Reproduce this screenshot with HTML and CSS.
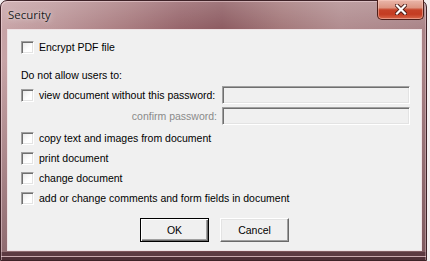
FILE: index.html
```html
<!DOCTYPE html>
<html>
<head>
<meta charset="utf-8">
<link rel="stylesheet" href="styles.css">
</head>
<body>
<div class="window">
  <div class="titlebar">
    <span class="title">Security</span>
    <div class="close">
      <svg width="12" height="11" viewBox="0 0 12 11">
        <path d="M2 1.5 L10 9.5 M10 1.5 L2 9.5" stroke="#4a1a14" stroke-width="4" stroke-linecap="square"/>
        <path d="M2 1.5 L10 9.5 M10 1.5 L2 9.5" stroke="#ffffff" stroke-width="2.2" stroke-linecap="square"/>
      </svg>
    </div>
  </div>
  <div class="client">
    <div class="row first"><span class="cb"></span><span class="lbl">Encrypt PDF file</span></div>
    <div class="heading">Do not allow users to:</div>
    <div class="pw">
      <div class="pwlabel"><span class="cb"></span><span class="lbl">view document without this password:</span></div>
      <div class="field"></div>
      <div class="pwlabel confirm">confirm password:</div>
      <div class="field"></div>
    </div>
    <div class="opts">
      <div class="row"><span class="cb"></span><span class="lbl">copy text and images from document</span></div>
      <div class="row"><span class="cb"></span><span class="lbl">print document</span></div>
      <div class="row"><span class="cb"></span><span class="lbl">change document</span></div>
      <div class="row"><span class="cb"></span><span class="lbl">add or change comments and form fields in document</span></div>
    </div>
    <div class="buttons">
      <div class="btn default">OK</div>
      <div class="btn">Cancel</div>
    </div>
  </div>
</div>
</body>
</html>
```
FILE: styles.css
```css
html, body {
  margin: 0;
  padding: 0;
  background: #f4eff0;
}
.window {
  position: relative;
  width: 427px;
  height: 261px;
  box-sizing: border-box;
  border: 1px solid #3e2227;
  border-radius: 7px 7px 0 0;
  padding: 0 4px 9px 6px;
  display: flex;
  flex-direction: column;
  background:
    linear-gradient(to bottom, rgba(255,255,255,0.18) 0px, rgba(255,255,255,0) 30px, rgba(70,35,42,0) 60px, rgba(70,35,42,0.45) 100%),
    linear-gradient(to right, #c8a4a7 0%, #bd979a 12%, #a87a7e 30%, #96646a 42%, #8c5a60 52%, #a37779 66%, #b08b8e 80%, #a98387 100%);
  box-shadow: inset 1px 1px 0 rgba(255,230,235,0.45), inset -1px 0 0 rgba(255,230,235,0.35), inset 0 -3px 0 #4e2f36, inset 0 -4px 0 #c9a8ad, inset 0 -8px 0 #5c3a41;
}
.titlebar {
  height: 28px;
  flex: none;
  display: flex;
  align-items: center;
  padding-left: 1px;
}
.title {
  font-family: "Open Sans", "Liberation Sans", sans-serif;
  font-size: 11.5px;
  color: #1b1b1b;
  margin-top: -2px;
  text-shadow: 0 0 6px rgba(255,255,255,0.7), 0 0 2px rgba(255,255,255,0.5);
}
.close {
  position: absolute;
  top: -1px;
  right: 2px;
  width: 47px;
  height: 20px;
  box-sizing: border-box;
  border: 1px solid #4d1f1a;
  border-top: none;
  border-radius: 0 0 5px 5px;
  background: linear-gradient(to bottom, #e9b6aa 0%, #dd9582 40%, #c64228 52%, #c43c22 75%, #d8674a 100%);
  box-shadow: inset 0 0 0 1px rgba(255,210,200,0.45);
  display: flex;
  align-items: center;
  justify-content: center;
}
.close svg { display: block; }
.client {
  flex: 1;
  background: #f0f0f0;
  border: 1px solid #efe2e5;
  padding: 7px 0 0 13px;
  font-family: "Liberation Sans", Arial, sans-serif;
  font-size: 10.5px;
  color: #000;
  display: flex;
  flex-direction: column;
}
.row {
  height: 20px;
  display: flex;
  align-items: center;
}
.cb {
  width: 13px;
  height: 13px;
  box-sizing: border-box;
  flex: none;
  border: 1px solid;
  border-color: #a0a0a0 #ffffff #ffffff #a0a0a0;
  box-shadow: inset 1px 1px 0 #6f6f6f, inset -1px -1px 0 #e3e3e3;
  background: linear-gradient(135deg, #e6e6e6, #ffffff 60%);
}
.lbl {
  margin-left: 5px;
  white-space: nowrap;
}
.heading {
  height: 20px;
  margin-top: 8px;
  display: flex;
  align-items: center;
}
.pw {
  margin-top: 1px;
  display: grid;
  grid-template-columns: 201px 188px;
  grid-auto-rows: 18px;
  row-gap: 3px;
}
.pwlabel {
  display: flex;
  align-items: center;
}
.pwlabel.confirm {
  justify-content: flex-end;
  padding-right: 5px;
  color: #8a8a8a;
}
.field {
  box-sizing: border-box;
  border: 1px solid;
  border-color: #a0a0a0 #ffffff #ffffff #a0a0a0;
  box-shadow: inset 1px 1px 0 #6f6f6f, inset -1px -1px 0 #e3e3e3;
  background: #f0f0f0;
}
.opts {
  margin-top: 3px;
  display: flex;
  flex-direction: column;
}
.buttons {
  margin-top: 10px;
  margin-left: -13px;
  display: flex;
  justify-content: center;
  gap: 11px;
}
.btn {
  width: 69px;
  height: 24px;
  box-sizing: border-box;
  border: 1px solid;
  border-color: #ffffff #696969 #696969 #ffffff;
  box-shadow: inset -1px -1px 0 #a0a0a0, inset 1px 1px 0 #e3e3e3;
  display: flex;
  align-items: center;
  justify-content: center;
  background: #f0f0f0;
}
.btn.default {
  border: 1px solid #000;
  box-shadow: inset 1px 1px 0 #ffffff, inset -1px -1px 0 #696969, inset -2px -2px 0 #a0a0a0;
}
```
